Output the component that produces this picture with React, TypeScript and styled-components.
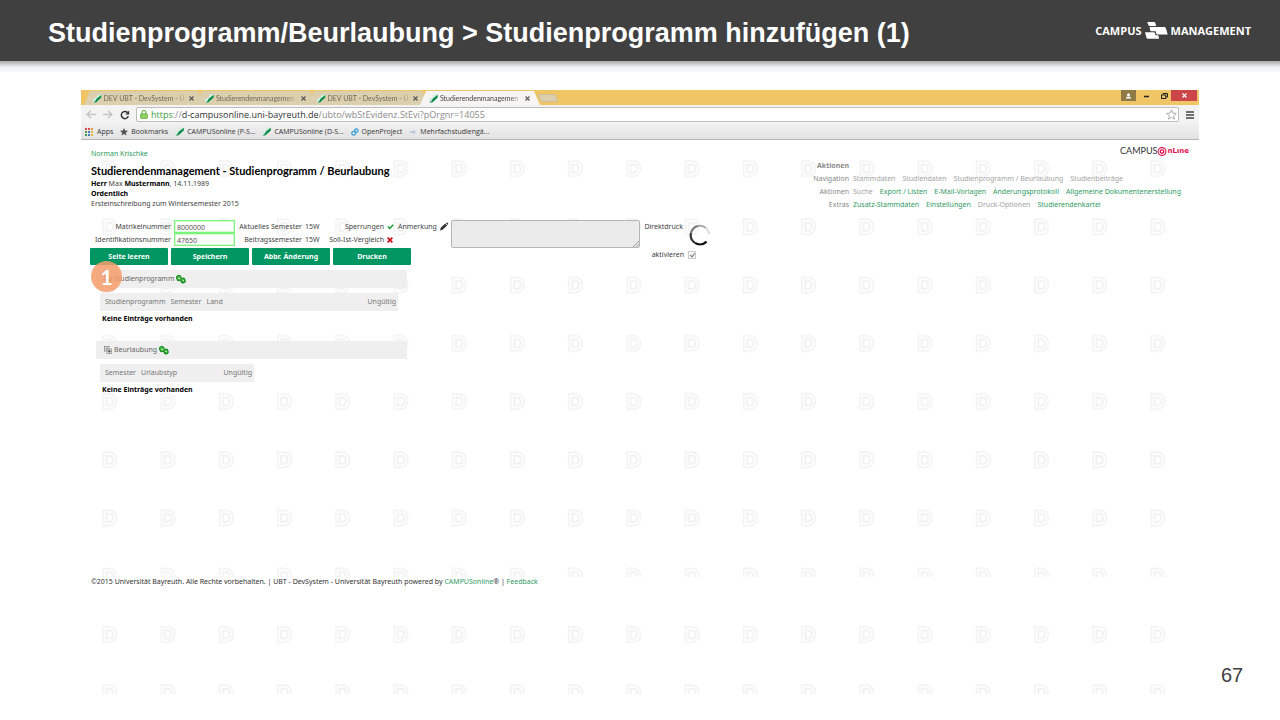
import React from "react";
import styled, { createGlobalStyle } from "styled-components";

const ui = `"Noto Sans", "Open Sans", sans-serif`;
const green = "#2f9a63";

const Global = createGlobalStyle`
  *, *::before, *::after { box-sizing: border-box; }
  body { margin: 0; background: #fff; font-family: ${ui}; }
  h1, h2, p { margin: 0; }
  button, input, textarea { font-family: inherit; margin: 0; }
  a { text-decoration: none; }
`;

/* ---------- slide ---------- */
const Slide = styled.div`
  min-height: 100vh;
  display: flex;
  flex-direction: column;
`;
const SlideHeader = styled.header`
  height: 61px;
  background: #404040;
  display: flex;
  align-items: center;
  justify-content: space-between;
  padding: 0 29px 0 48px;
`;
const SlideTitle = styled.h1`
  font: bold 27px/32px "Liberation Sans", Arial, sans-serif;
  color: #fff;
  padding-top: 5px;
  white-space: nowrap;
`;
const Brand = styled.div`
  display: flex;
  align-items: center;
  gap: 3px;
  color: #fff;
  font: bold 11px/16px "Open Sans", sans-serif;
  white-space: nowrap;
`;
const HeaderShade = styled.div`
  height: 11px;
  background: linear-gradient(#a6a8aa 0, #c9cccf 3px, #eef1f5 6px, #f5f8fb 100%);
`;
const SlideBody = styled.div`
  flex: 1;
  display: grid;
  grid-template-columns: 81px minmax(0, 1fr) 81px;
  padding: 18px 0 26px;
`;
const PageNumber = styled.div`
  grid-column: 3;
  align-self: end;
  padding: 0 0 7px 22px;
  font: 20px/24px "Liberation Sans", Arial, sans-serif;
  color: #404040;
`;

/* ---------- browser ---------- */
const Browser = styled.section`
  grid-column: 2;
  display: flex;
  flex-direction: column;
`;
const TabStrip = styled.div`
  height: 15px;
  display: flex;
  align-items: flex-end;
  background: #efc566;
  padding-left: 3px;
`;
const TabShape = styled.div<{ $active?: boolean }>`
  width: 120px;
  height: 14px;
  margin-right: -8px;
  position: relative;
  z-index: ${(p) => (p.$active ? 1 : 0)};
  display: flex;
  align-items: center;
  gap: 2px;
  padding: 0 8px 0 9px;
  clip-path: polygon(6px 0, 114px 0, 100% 100%, 0 100%);
  background: ${(p) => (p.$active ? "#f6f5f3" : "#dccfae")};
  color: ${(p) => (p.$active ? "#444" : "#6f6a5c")};
  font: 7px/14px Lato, sans-serif;
`;
const TabText = styled.span`
  width: 80px;
  white-space: nowrap;
  mask-image: linear-gradient(90deg, #000 88%, rgba(0, 0, 0, 0.3));
`;
const PlainButton = styled.button`
  border: 0;
  padding: 0;
  background: none;
  color: inherit;
  display: flex;
  align-items: center;
  justify-content: center;
`;
const TabClose = styled(PlainButton)`
  width: 9px;
  height: 9px;
  margin-left: 2px;
`;
const NewTab = styled.button`
  width: 18px;
  height: 8px;
  margin: 0 0 3px 7px;
  border: 1px solid #cfbf94;
  border-radius: 2px;
  background: #dccfae;
  padding: 0;
  transform: skewX(20deg);
`;
const WindowButtons = styled.div`
  margin-left: auto;
  align-self: flex-start;
  display: flex;
  padding-right: 2px;
`;
const WinButton = styled(PlainButton)<{ $bg?: string; $w: number }>`
  width: ${(p) => p.$w}px;
  height: 11px;
  background: ${(p) => p.$bg ?? "transparent"};
`;
const Toolbar = styled.div`
  height: 19px;
  display: flex;
  align-items: center;
  gap: 7px;
  padding: 0 4px 0 5px;
  background: #f3f3f3;
`;
const AddressBar = styled.div`
  flex: 1;
  height: 15px;
  display: flex;
  align-items: center;
  gap: 3px;
  border: 1px solid #bdbdbd;
  border-radius: 2px;
  background: #fff;
  padding: 0 1px 0 3px;
  margin-left: -1px;
`;
const Address = styled.div`
  flex: 1;
  font: 9px/13px "Open Sans", sans-serif;
  color: #8a8a8a;
  white-space: nowrap;
  em { font-style: normal; color: #3c9a3c; }
  b { font-weight: 400; color: #333; }
`;
const Bookmarks = styled.nav`
  height: 16px;
  display: flex;
  align-items: center;
  gap: 7px;
  padding: 0 5px 0 4px;
  background: linear-gradient(#f0f0f0, #e2e2e2);
  border-bottom: 1px solid #b5b5b5;
`;
const Bookmark = styled.a`
  display: flex;
  align-items: center;
  gap: 3px;
  font: 7px/14px "Open Sans", sans-serif;
  color: #333;
  white-space: nowrap;
`;

/* ---------- web page ---------- */
const Page = styled.main`
  flex: 1;
  position: relative;
  overflow: hidden;
  padding: 5px 10px 0;
  font-size: 7px;
  line-height: 10px;
  color: #444;
`;
const Watermark = styled.svg`
  position: absolute;
  inset: -50px 0 auto 0;
  width: 100%;
  z-index: -1;
`;
const Top = styled.div`
  display: flex;
  justify-content: space-between;
  height: 75px;
`;
const Link = styled.a<{ $muted?: boolean }>`
  color: ${(p) => (p.$muted ? "#a3a3a3" : green)};
`;
const Heading = styled.h2`
  font: bold 11px/14px Lato, sans-serif;
  color: #000;
  margin: 5px 0 1px;
  white-space: nowrap;
`;
const Strong = styled.strong`
  color: #000;
`;
const UserLine = styled.p`
  padding-top: 4px;
`;
const NavArea = styled.div`
  width: 379px;
`;
const OnlineLogo = styled.div`
  display: flex;
  align-items: center;
  justify-content: flex-end;
  height: 12px;
  font: 9px/12px Lato, sans-serif;
  color: #333;
  b { color: #e3114f; font: bold 7px/10px "DejaVu Sans", sans-serif; }
`;
const NavBlock = styled.nav`
  padding-top: 2px;
`;
const NavRow = styled.div`
  display: grid;
  grid-template-columns: 39px auto;
  column-gap: 4px;
  height: 13px;
  align-items: center;
  justify-content: start;
  color: #888;
  white-space: nowrap;
  > :first-child { text-align: right; }
`;
const NavLinks = styled.div`
  display: flex;
  gap: 7px;
`;
const FormRow = styled.div`
  display: flex;
  align-items: flex-start;
`;
const Fields = styled.div`
  display: grid;
  grid-template-columns: 80px 61px 64px 16px 60px 8px;
  column-gap: 3px;
  grid-auto-rows: 13px;
  align-items: center;
  white-space: nowrap;
`;
const FieldLabel = styled.label`
  display: flex;
  justify-content: flex-end;
`;
const TextInput = styled.input`
  width: 61px;
  height: 13px;
  border: 1px solid #7cf57c;
  outline: 1px solid #d5fbd5;
  outline-offset: -2px;
  background: #fff;
  font-size: 7px;
  line-height: 9px;
  color: #555;
  padding: 1px 2px 0;
`;
const Remark = styled.label`
  display: flex;
  align-items: center;
  gap: 3px;
  height: 13px;
  margin-left: 3px;
`;
const TextareaHolder = styled.div`
  position: relative;
  height: 28px;
  margin-left: 2px;
  svg { position: absolute; right: 1px; bottom: 1px; }
`;
const RemarkBox = styled.textarea`
  width: 189px;
  height: 28px;
  border: 1px solid #b5b5b5;
  border-radius: 2px;
  background: #ebebeb;
  resize: none;
`;
const PrintLabel = styled.span`
  width: 43px;
  text-align: right;
  line-height: 13px;
`;
const Spinner = styled.svg`
  margin: 4px 0 0 6px;
`;
const Actions = styled.div`
  display: flex;
  align-items: center;
  gap: 3px;
  height: 17px;
  margin-left: -1px;
`;
const ActionButton = styled.button`
  width: 78px;
  height: 17px;
  border: 0;
  border-radius: 1px;
  background: #009661;
  color: #fff;
  font-size: 7px;
  font-weight: 700;
  padding: 0;
`;
const Activate = styled.label`
  display: flex;
  align-items: center;
  justify-content: flex-end;
  gap: 4px;
  width: 282px;
  padding-bottom: 4px;
`;
const Check = styled.input`
  appearance: none;
  width: 8px;
  height: 8px;
  border: 1px solid #ccc;
  background: #f4f4f4;
  display: grid;
  place-items: center;
  &:checked::before {
    content: "";
    width: 3px;
    height: 5px;
    border: solid #777;
    border-width: 0 1px 1px 0;
    transform: rotate(40deg);
  }
`;
const Section = styled.section`
  width: 311px;
  margin: 5px 0 0 5px;
  height: 66px;
  position: relative;
`;
const SectionBar = styled.div`
  height: 18px;
  display: flex;
  align-items: center;
  gap: 2px;
  padding-left: 8px;
  background: #efefef;
  color: #666;
`;
const DataTable = styled.table<{ $w: number }>`
  width: ${(p) => p.$w}px;
  margin: 5px 0 0 4px;
  border-collapse: collapse;
  color: #777;
  white-space: nowrap;
  th {
    font-weight: 400;
    text-align: left;
    height: 18px;
    background: #efefef;
    padding: 0 0 0 5px;
  }
  th:last-child { text-align: right; padding-right: 2px; width: 100%; }
  td { padding: 0 0 0 2px; height: 15px; color: #000; font-weight: 700; }
`;
const Step = styled.div`
  position: absolute;
  left: -5px;
  top: -9px;
  width: 31px;
  height: 31px;
  border-radius: 50%;
  background: rgba(244, 157, 108, 0.86);
  color: #fff;
  font: bold 21px/31px Lato, sans-serif;
  text-align: center;
`;
const Footer = styled.footer`
  margin: 170px -10px 0;
  padding: 0 10px;
  height: 18px;
  background: #fff;
  color: #333;
`;

/* ---------- drawings ---------- */
const Favicon = () => (
  <svg width="9" height="9" viewBox="0 0 9 9">
    <path d="M0 9V5L4 3V1L9 0v3L5 8Z" fill="#d3ebde" />
    <path d="M.5 8.800Q2.500 7.800 4 4.500L8.800.8V3.500L5.500 6.500Q4 8.800 .5 8.800Z" fill="#0b8a4a" />
  </svg>
);
const Cross = ({ color = "#555", s = 5, w = 1.1 }) => (
  <svg width={s} height={s} viewBox="0 0 5 5">
    <path d="M.5.5l4 4M4.500.5l-4 4" stroke={color} strokeWidth={w} />
  </svg>
);
const Arrow = ({ flip = false }) => (
  <svg width="10" height="9" viewBox="0 0 10 9">
    <path
      d={flip ? "M0 4.500h9M5 .8l4 3.700-4 3.700" : "M10 4.500H1M5 .8L1 4.500l4 3.700"}
      fill="none" stroke="#c4c4c4" strokeWidth="1.400"
    />
  </svg>
);
const Chain = () => (
  <svg width="10" height="9" viewBox="0 0 10 9">
    <rect x=".7" y=".6" width="4.400" height="5" rx="1.800" transform="rotate(-15 3 3)" fill="#4dbb44" stroke="#16871f" />
    <rect x="5" y="3.200" width="4.200" height="4.800" rx="1.800" transform="rotate(-15 7 6)" fill="#2fa82f" stroke="#16871f" />
    <path d="M2.500 3.200l2 .6M6 4.800l2 1" stroke="#e2f8dc" strokeWidth=".9" />
  </svg>
);
const Expand = () => (
  <svg width="8" height="8" viewBox="0 0 8 8" fill="none" stroke="#888" strokeWidth=".8">
    <rect x=".5" y=".5" width="4.500" height="4.500" />
    <path d="M1.500 2.700h2.500M2.700 1.500V4" />
    <rect x="3" y="3" width="4.500" height="4.500" fill="#fff" />
    <path d="M3.800 5.200h3M5.200 3.800v3" stroke="#222" />
  </svg>
);

type NavItem = { text: string; muted?: boolean };
const NAV: { label: string; items: NavItem[] }[] = [
  {
    label: "Navigation",
    items: [
      { text: "Stammdaten", muted: true },
      { text: "Studiendaten", muted: true },
      { text: "Studienprogramm / Beurlaubung", muted: true },
      { text: "Studienbeiträge", muted: true },
    ],
  },
  {
    label: "Aktionen",
    items: [
      { text: "Suche", muted: true },
      { text: "Export / Listen" },
      { text: "E-Mail-Vorlagen" },
      { text: "Änderungsprotokoll" },
      { text: "Allgemeine Dokumentenerstellung" },
    ],
  },
  {
    label: "Extras",
    items: [
      { text: "Zusatz-Stammdaten" },
      { text: "Einstellungen" },
      { text: "Druck-Optionen", muted: true },
      { text: "Studierendenkartei" },
    ],
  },
];
const TABS = ["DEV UBT - DevSystem - U", "Studierendenmanagemen", "DEV UBT - DevSystem - U", "Studierendenmanagemen"];
const APP_DOTS = ["#e04a3f", "#e04a3f", "#e8963a", "#4a9b4f", "#4a78c8", "#e8b83a", "#4a9b4f", "#4a78c8", "#e8b83a"];

export default function App() {
  return (
    <Slide>
      <Global />
      <SlideHeader>
        <SlideTitle>Studienprogramm/Beurlaubung &gt; Studienprogramm hinzufügen (1)</SlideTitle>
        <Brand>
          CAMPUS
          <svg width="23" height="17" viewBox="0 0 23 17" fill="#fff">
            <path d="M2.200 0h6.800q1 0 1.300 1l.9 3H4.700q-1 0-1.300-1Z" />
            <path d="M4.500 5h14.500q1.500 0 1.900 1.200L22.700 12.500H12.500q-1 0-1.300-1L10.700 9.300H6.500q-1 0-1.300-1Z" />
            <path d="M0 10.300h8.700q1 0 1.300 1l.5 2h2.800l.8 3.400H3q-1.200 0-1.500-1Z" />
          </svg>
          MANAGEMENT
        </Brand>
      </SlideHeader>
      <HeaderShade />
      <SlideBody>
        <Browser>
          <TabStrip>
            {TABS.map((t, i) => (
              <TabShape key={i} $active={i === 3}>
                <Favicon />
                <TabText>{t}</TabText>
                <TabClose aria-label="Tab schließen"><Cross /></TabClose>
              </TabShape>
            ))}
            <NewTab aria-label="Neuer Tab" />
            <WindowButtons>
              <WinButton $w={15} $bg="#8f7a45" aria-label="Benutzer">
                <svg width="7" height="6" viewBox="0 0 7 6" fill="#fff"><circle cx="3.500" cy="1.700" r="1.500" /><path d="M.8 5.500q0-2 2.700-2t2.700 2Z" /></svg>
              </WinButton>
              <WinButton $w={21} aria-label="Minimieren">
                <svg width="5" height="5" viewBox="0 0 5 5"><path d="M0 3.500h5" stroke="#222" strokeWidth="1.500" /></svg>
              </WinButton>
              <WinButton $w={14} aria-label="Wiederherstellen">
                <svg width="7" height="6" viewBox="0 0 7 6" fill="none" stroke="#222"><path d="M2 1.500V.5h4.500V4H5" /><rect x=".5" y="2" width="4.200" height="3.500" /></svg>
              </WinButton>
              <WinButton $w={26} $bg="#cb4648" aria-label="Schließen"><Cross color="#fff" /></WinButton>
            </WindowButtons>
          </TabStrip>
          <Toolbar>
            <PlainButton aria-label="Zurück"><Arrow /></PlainButton>
            <PlainButton aria-label="Vorwärts"><Arrow flip /></PlainButton>
            <PlainButton aria-label="Neu laden">
              <svg width="10" height="10" viewBox="0 0 10 10"><path d="M8.300 6.300A3.600 3.600 0 1 1 7.500 2.500" fill="none" stroke="#333" strokeWidth="1.500" /><path d="M9.200.5v4H5.300Z" fill="#333" /></svg>
            </PlainButton>
            <AddressBar>
              <svg width="8" height="9" viewBox="0 0 8 9"><path d="M2 4V2.500a2 2 0 0 1 4 0V4" fill="none" stroke="#6cb34c" strokeWidth="1.200" /><rect x=".5" y="3.800" width="7" height="4.700" rx=".8" fill="#8fce63" stroke="#5fa63c" strokeWidth=".7" /></svg>
              <Address role="textbox" aria-label="Adresse">
                <em>https</em>://<b>d-campusonline.uni-bayreuth.de</b>/ubto/wbStEvidenz.StEvi?pOrgnr=14055
              </Address>
              <svg width="11" height="11" viewBox="0 0 11 11"><path d="M5.500.8l1.400 3.300 3.500.3-2.700 2.300.8 3.500-3-1.900-3 1.900.8-3.500L.6 4.400l3.500-.3Z" fill="#fff" stroke="#999" strokeWidth=".8" /></svg>
            </AddressBar>
            <PlainButton aria-label="Menü">
              <svg width="9" height="8" viewBox="0 0 9 8"><path d="M0 1h8M0 4h8M0 7h8" stroke="#444" strokeWidth="1.700" /></svg>
            </PlainButton>
          </Toolbar>
          <Bookmarks>
            <Bookmark href="#">
              <svg width="9" height="8" viewBox="0 0 9 8">
                {APP_DOTS.map((c, i) => (
                  <rect key={i} x={(i % 3) * 3} y={Math.floor(i / 3) * 3} width="2" height="2" fill={c} />
                ))}
              </svg>
              Apps
            </Bookmark>
            <Bookmark href="#">
              <svg width="8" height="8" viewBox="0 0 8 8"><path d="M4 0l1.200 2.600 2.800.2-2.200 1.900.8 2.900L4 6.100 1.400 7.600l.8-2.900L0 2.800l2.800-.2Z" fill="#555" /></svg>
              Bookmarks
            </Bookmark>
            <Bookmark href="#"><Favicon />CAMPUSonline (P-S...</Bookmark>
            <Bookmark href="#"><Favicon />CAMPUSonline (D-S...</Bookmark>
            <Bookmark href="#">
              <svg width="8" height="8" viewBox="0 0 8 8" fill="none" stroke="#3ba0d8" strokeWidth="1.300"><circle cx="2.700" cy="5.200" r="1.900" /><circle cx="5.300" cy="2.700" r="1.700" /></svg>
              OpenProject
            </Bookmark>
            <Bookmark href="#">
              <svg width="8" height="8" viewBox="0 0 8 8"><path d="M1 3h3V1.500L7 4 4 6.500V5H1Z" fill="#bccbdc" /></svg>
              Mehrfachstudiengä...
            </Bookmark>
          </Bookmarks>

          <Page>
            <Watermark viewBox="0 0 1920 1200" aria-hidden="true">
              <defs>
                <pattern id="mark" x="35" y="20" width="100" height="100" patternUnits="userSpaceOnUse">
                  <path d="M3 2h10q13 0 13 13T13 28H3Z" fill="none" stroke="#f3f3f3" strokeWidth="3" />
                  <path d="M9 8h4q7 0 7 7t-7 7H9Z" fill="none" stroke="#f0f0f0" strokeWidth="3" />
                </pattern>
              </defs>
              <rect width="1920" height="1200" fill="url(#mark)" />
            </Watermark>

            <Top>
              <div>
                <UserLine><Link href="#">Norman Krischke</Link></UserLine>
                <Heading>Studierendenmanagement - Studienprogramm / Beurlaubung</Heading>
                <p><Strong>Herr</Strong> Max <Strong>Mustermann</Strong>, 14.11.1989</p>
                <p><Strong>Ordentlich</Strong></p>
                <p>Ersteinschreibung zum Wintersemester 2015</p>
              </div>
              <NavArea>
                <OnlineLogo>
                  CAMPUS
                  <svg width="10" height="9" viewBox="0 0 10 9" fill="none" stroke="#e3114f"><circle cx="5" cy="4.500" r="3.900" strokeWidth="1.100" /><circle cx="5" cy="4.500" r="1.700" strokeWidth="1.300" /></svg>
                  <b>nLıne</b>
                </OnlineLogo>
                <NavBlock>
                  <NavRow><strong>Aktionen</strong></NavRow>
                  {NAV.map(({ label, items }) => (
                    <NavRow key={label}>
                      <span>{label}</span>
                      <NavLinks>
                        {items.map(({ text, muted }) => (
                          <Link key={text} href="#" $muted={muted}>{text}</Link>
                        ))}
                      </NavLinks>
                    </NavRow>
                  ))}
                </NavBlock>
              </NavArea>
            </Top>

            <FormRow>
              <Fields>
                <FieldLabel htmlFor="matr">Matrikelnummer</FieldLabel>
                <TextInput id="matr" defaultValue="8000000" />
                <FieldLabel as="span">Aktuelles Semester</FieldLabel>
                <span>15W</span>
                <FieldLabel as="span">Sperrungen</FieldLabel>
                <svg width="7" height="7" viewBox="0 0 7 7"><path d="M.8 3.500l1.900 2L6.200 1.800" fill="none" stroke="#159a2c" strokeWidth="1.400" /></svg>
                <FieldLabel htmlFor="ident">Identifikationsnummer</FieldLabel>
                <TextInput id="ident" defaultValue="47650" />
                <FieldLabel as="span">Beitragssemester</FieldLabel>
                <span>15W</span>
                <FieldLabel as="span">Soll-Ist-Vergleich</FieldLabel>
                <Cross color="#d0121b" s={6} w={1.5} />
              </Fields>
              <Remark htmlFor="remark">
                Anmerkung
                <svg width="9" height="9" viewBox="0 0 9 9"><path d="M0 8.500l.7-2.700L5.200 1.600l1.900 1.900-4.500 4.300Z M5.800 1Q6.800 0 7.800.9t0 2Z" fill="#333" /></svg>
              </Remark>
              <TextareaHolder>
                <RemarkBox id="remark" disabled />
                <svg width="6" height="6" viewBox="0 0 6 6"><path d="M0 6l6-6M3 6l3-3" stroke="#888" strokeWidth=".8" /></svg>
              </TextareaHolder>
              <PrintLabel>Direktdruck</PrintLabel>
              <Spinner width="22" height="22" viewBox="0 0 22 22" fill="none" strokeWidth="2.200">
                <path d="M17.500 17.600A9.300 9.300 0 0 1 6 18.900" stroke="#111" />
                <path d="M6 18.900A9.300 9.300 0 0 1 2 9" stroke="#333" />
                <path d="M2 9A9.300 9.300 0 0 1 9 2" stroke="#777" />
                <path d="M9 2A9.300 9.300 0 0 1 17 4" stroke="#aaa" />
                <path d="M17 4A9.300 9.300 0 0 1 20.300 10" stroke="#ddd" />
              </Spinner>
            </FormRow>
            <Actions>
              <ActionButton>Seite leeren</ActionButton>
              <ActionButton>Speichern</ActionButton>
              <ActionButton>Abbr. Änderung</ActionButton>
              <ActionButton>Drucken</ActionButton>
              <Activate>aktivieren<Check type="checkbox" defaultChecked disabled /></Activate>
            </Actions>

            <Section>
              <SectionBar><Expand />Studienprogramm<Chain /></SectionBar>
              <DataTable $w={298}>
                <thead><tr><th>Studienprogramm</th><th>Semester</th><th>Land</th><th>Ungültig</th></tr></thead>
                <tbody><tr><td colSpan={4}>Keine Einträge vorhanden</td></tr></tbody>
              </DataTable>
              <Step>1</Step>
            </Section>
            <Section>
              <SectionBar><Expand />Beurlaubung<Chain /></SectionBar>
              <DataTable $w={154}>
                <thead><tr><th>Semester</th><th>Urlaubstyp</th><th>Ungültig</th></tr></thead>
                <tbody><tr><td colSpan={3}>Keine Einträge vorhanden</td></tr></tbody>
              </DataTable>
            </Section>

            <Footer>
              ©2015 Universität Bayreuth. Alle Rechte vorbehalten. | UBT - DevSystem - Universität Bayreuth powered by{" "}
              <Link href="#">CAMPUSonline</Link>® | <Link href="#">Feedback</Link>
            </Footer>
          </Page>
        </Browser>
        <PageNumber>67</PageNumber>
      </SlideBody>
    </Slide>
  );
}
